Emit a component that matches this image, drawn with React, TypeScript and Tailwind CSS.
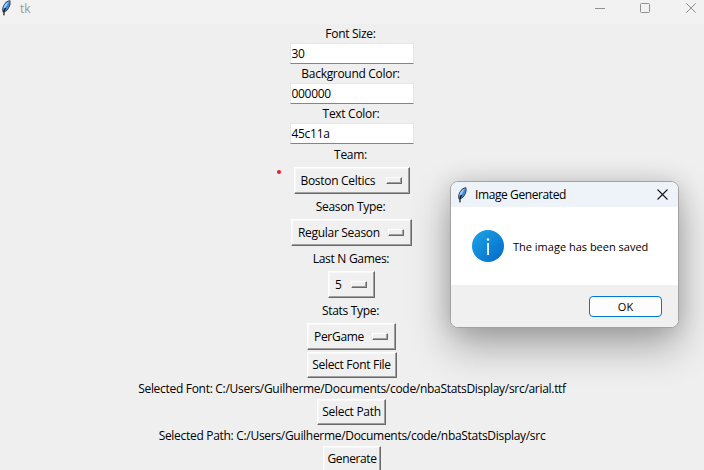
import type { ReactNode } from "react";

function Feather({ className }: { className: string }) {
  return (
    <svg className={className} viewBox="0 0 10 16" fill="none">
      <path d="M2 12.5C0.4 10 1.4 6 4 3 5.6 1.2 7.6 0.2 9.3 0.4 10 2.4 9.4 6 7.7 8.6 6.4 10.8 4.4 12.4 2 12.5Z" fill="#27374d" />
      <path d="M1.9 11C1.6 8.4 2.8 5.4 4.7 3.3 6 1.9 7.5 1.1 8.8 1 9 3.4 8.3 6.2 6.9 8.4 5.8 10 4.2 11.2 2.6 11.4Z" fill="#4189dd" />
      <path d="M2.4 8.2C3 5.5 5 2.8 7.8 1.6L4.6 7.4Z" fill="#a9cff3" />
      <path d="M4.6 8 3.1 11 2.9 15.4" stroke="#111" strokeWidth="1.2" />
    </svg>
  );
}

function Label({ children, className }: { children: ReactNode; className: string }) {
  return <div className={`flex items-center justify-center whitespace-pre ${className}`}>{children}</div>;
}

function Entry({ value }: { value: string }) {
  return (
    <div className="flex h-[21px] w-[124px] items-center border border-[#e6e6e6] border-b-[#858585] bg-white pl-px">
      <span>{value}</span>
    </div>
  );
}

const relief =
  "flex items-center whitespace-pre border border-t-white border-l-white border-r-[#696969] border-b-[#696969] bg-[#f0f0f0] shadow-[inset_-1px_-1px_0_#a0a0a0,inset_1px_1px_0_#f8f8f8]";

function Option({ children, className }: { children: ReactNode; className: string }) {
  return (
    <div className={`${relief} h-[27px] justify-between pr-[7px] pl-[6px] ${className}`}>
      <span>{children}</span>
      <span className="h-[7px] w-4 border border-t-white border-l-white border-r-[#696969] border-b-[#696969] shadow-[inset_-1px_-1px_0_#a0a0a0]" />
    </div>
  );
}

function Button({ children, className }: { children: ReactNode; className: string }) {
  return <div className={`${relief} h-[26px] shrink-0 justify-center ${className}`}>{children}</div>;
}

export default function App() {
  return (
    <div className="relative flex h-[470px] w-[704px] flex-col overflow-hidden bg-[#efefef] font-['Open_Sans','Noto_Sans',sans-serif] text-[12px] leading-4 tracking-[-0.3px] text-black">
      <header className="flex h-6 shrink-0 items-start justify-between bg-[#f2f2f2] text-[#999]">
        <div className="flex">
          <Feather className="ml-[1px] h-4 w-[10px]" />
          <span className="ml-[9px] pt-px tracking-normal">tk</span>
        </div>
        <svg className="h-4 w-[109px]" viewBox="0 0 109 16" fill="none" stroke="#909090">
          <path d="M0 8.5h10" />
          <rect x="45.5" y="3.5" width="9" height="9" rx="1" />
          <path d="m91.3 3.3 9.4 9.4m0-9.4-9.4 9.4" />
        </svg>
      </header>
      <main className="flex flex-col items-center pr-px">
        <Label className="h-[19px] pr-[2px]">Font Size:</Label>
        <Entry value="30" />
        <Label className="h-[19px] pr-[2px]">Background Color:</Label>
        <Entry value="000000" />
        <Label className="h-[19px] pr-px">Text Color:</Label>
        <Entry value="45c11a" />
        <Label className="h-[23px] pr-[2px] pb-px">Team:</Label>
        <Option className="w-[116px]">Boston Celtics</Option>
        <Label className="h-[25px] pr-[2px]">Season Type:</Label>
        <Option className="w-[121px]">Regular Season</Option>
        <Label className="h-[25px] pr-px">Last N Games:</Label>
        <Option className="w-[47px]">5</Option>
        <Label className="h-[25px] pr-[2px]">Stats Type:</Label>
        <Option className="w-[89px]">PerGame</Option>
        <Button className="mt-[2px] w-[90px]">Select Font File</Button>
        <Label className="h-[21px] pl-px">Selected Font: C:/Users/Guilherme/Documents/code/nbaStatsDisplay/src/arial.ttf</Label>
        <Button className="w-[69px]">Select Path</Button>
        <Label className="h-[21px] pl-px">Selected Path: C:/Users/Guilherme/Documents/code/nbaStatsDisplay/src</Label>
        <Button className="w-[58px] pl-px tracking-[-0.4px]">Generate</Button>
      </main>
      <span className="absolute top-[170px] left-[277px] size-1 rounded-full bg-[#ed1c24]" />
      <section className="absolute top-[181px] left-[450px] flex h-[147px] w-[229px] flex-col overflow-hidden rounded-lg border border-[#a3a3a3] bg-white shadow-[0_18px_40px_rgba(0,0,0,0.32),0_0_22px_rgba(0,0,0,0.12)]">
        <div className="flex h-[25px] shrink-0 items-center bg-[#eef3fa]">
          <Feather className="ml-[6px] h-4 w-[10px]" />
          <span className="ml-2 pt-px tracking-[-0.4px]">Image Generated</span>
          <svg className="mr-[10px] ml-auto size-[11px]" viewBox="0 0 11 11" stroke="#191919" strokeWidth="1.1">
            <path d="m.5.5 10 10m0-10-10 10" />
          </svg>
        </div>
        <div className="flex h-[78px] shrink-0 items-center pl-[21px]">
          <div className="flex size-8 items-center justify-center rounded-full bg-linear-to-br from-[#1fa5e8] to-[#0669c8]">
            <svg className="size-8" viewBox="0 0 32 32" fill="white">
              <circle cx="16" cy="9.5" r="1.3" />
              <path d="M15.2 13h1.7v12h-1.7z" />
            </svg>
          </div>
          <span className="ml-[9px] pt-[2px] text-[11px] tracking-normal">The image has been saved</span>
        </div>
        <div className="flex flex-1 items-start justify-end bg-[#f0f0f0] pt-[11px] pr-4">
          <div className="flex h-[21px] w-[73px] items-center justify-center rounded-[4px] border border-[#0078d4] bg-[#fdfdfd] text-[11px] tracking-normal">OK</div>
        </div>
      </section>
    </div>
  );
}
